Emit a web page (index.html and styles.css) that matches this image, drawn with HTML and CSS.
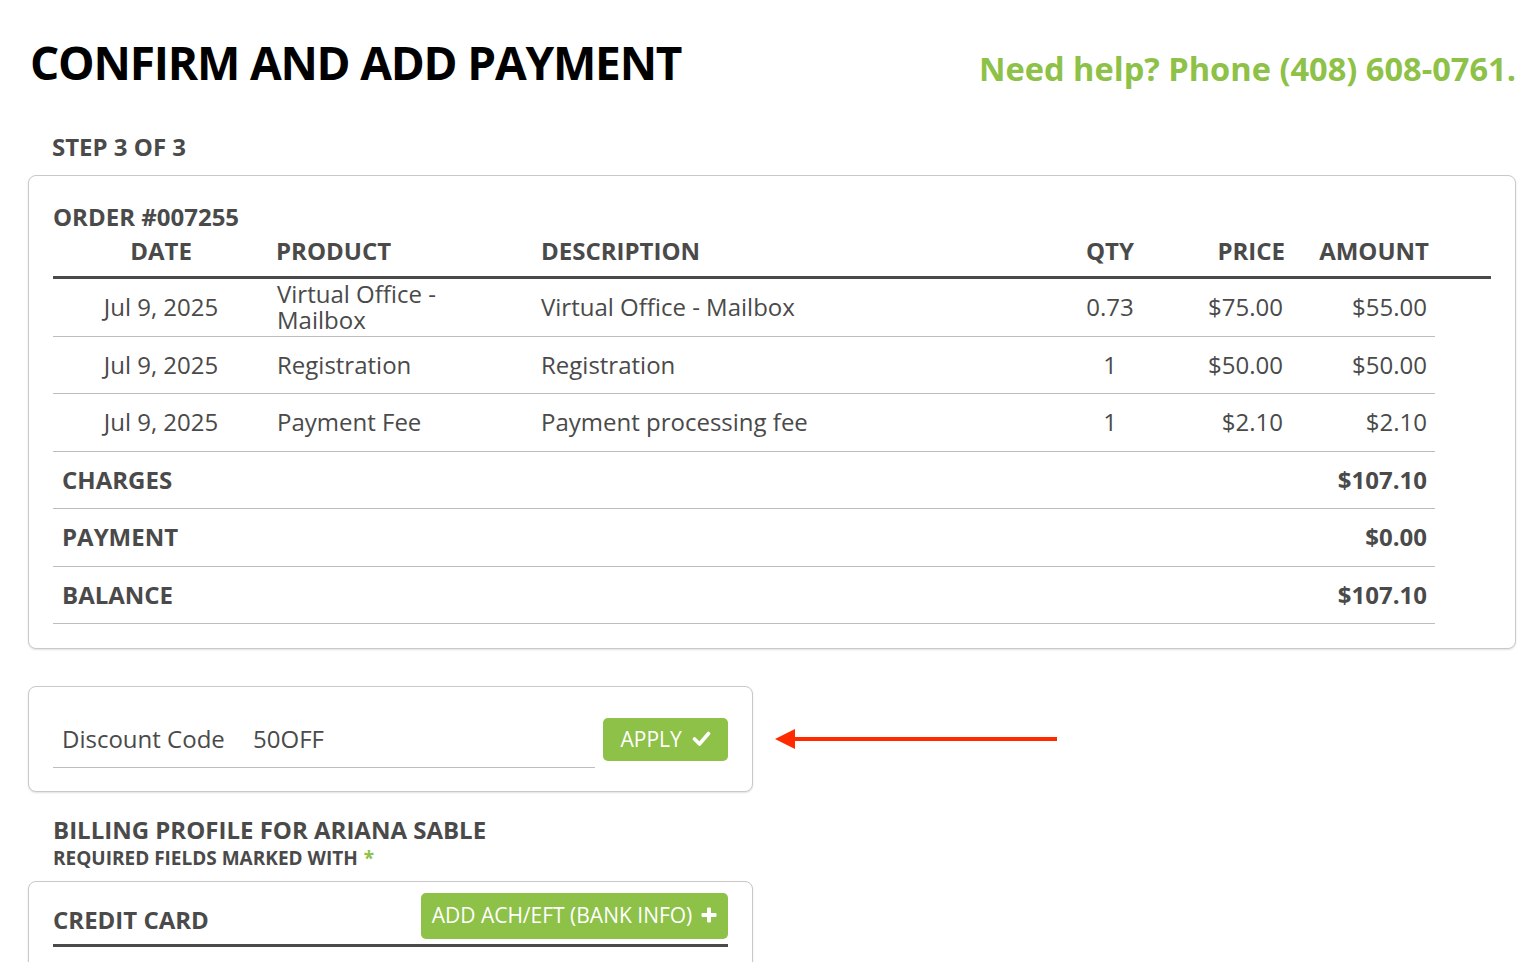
FILE: index.html
```html
<!DOCTYPE html>
<html>
<head>
<meta charset="utf-8">
<link rel="stylesheet" href="styles.css">
</head>
<body>
<div class="page">
  <div class="top">
    <h1 class="title">CONFIRM AND ADD PAYMENT</h1>
    <div class="help">Need help? Phone (408) 608-0761.</div>
  </div>
  <div class="step">STEP 3 OF 3</div>

  <div class="card order-card">
    <div class="order-no">ORDER #007255</div>
    <div class="thead">
      <div class="c-date">DATE</div>
      <div class="c-prod">PRODUCT</div>
      <div class="c-desc">DESCRIPTION</div>
      <div class="c-qty">QTY</div>
      <div class="c-num">PRICE</div>
      <div class="c-num">AMOUNT</div>
      <div></div>
    </div>
    <div class="tr">
      <div class="c-date">Jul 9, 2025</div>
      <div class="c-prod">Virtual Office - Mailbox</div>
      <div class="c-desc">Virtual Office - Mailbox</div>
      <div class="c-qty">0.73</div>
      <div class="c-num">$75.00</div>
      <div class="c-num">$55.00</div>
    </div>
    <div class="tr">
      <div class="c-date">Jul 9, 2025</div>
      <div class="c-prod">Registration</div>
      <div class="c-desc">Registration</div>
      <div class="c-qty">1</div>
      <div class="c-num">$50.00</div>
      <div class="c-num">$50.00</div>
    </div>
    <div class="tr">
      <div class="c-date">Jul 9, 2025</div>
      <div class="c-prod">Payment Fee</div>
      <div class="c-desc">Payment processing fee</div>
      <div class="c-qty">1</div>
      <div class="c-num">$2.10</div>
      <div class="c-num">$2.10</div>
    </div>
    <div class="total"><div class="t-label">CHARGES</div><div class="t-val">$107.10</div></div>
    <div class="total"><div class="t-label">PAYMENT</div><div class="t-val">$0.00</div></div>
    <div class="total"><div class="t-label">BALANCE</div><div class="t-val">$107.10</div></div>
  </div>

  <div class="discount-wrap">
    <div class="card discount-card">
      <div class="discount-field">
        <span class="d-label">Discount Code</span>
        <span class="d-value">50OFF</span>
      </div>
      <button class="btn apply-btn">APPLY
        <svg class="ico" width="19" height="19" viewBox="0 0 19 19"><polyline points="2.5,10 7.5,15 16.5,4.5" fill="none" stroke="#fff" stroke-width="3.6" stroke-linecap="round" stroke-linejoin="round"/></svg>
      </button>
    </div>
    <svg class="arrow" width="282" height="22" viewBox="0 0 282 22"><polygon points="0,11 20,1 20,21" fill="#ff2a00"/><rect x="18" y="9" width="264" height="4" fill="#ff2a00"/></svg>
  </div>

  <div class="billing-title">BILLING PROFILE FOR ARIANA SABLE</div>
  <div class="required">REQUIRED FIELDS MARKED WITH <span class="star">*</span></div>

  <div class="card cc-card">
    <div class="cc-head">
      <div class="cc-title">CREDIT CARD</div>
      <button class="btn ach-btn">ADD ACH/EFT (BANK INFO)
        <svg class="ico" width="16" height="16" viewBox="0 0 16 16"><rect x="6" y="0.5" width="4" height="15" rx="1" fill="#fff"/><rect x="0.5" y="6" width="15" height="4" rx="1" fill="#fff"/></svg>
      </button>
    </div>
  </div>
</div>
</body>
</html>
```

FILE: styles.css
```css
html, body {
  margin: 0;
  padding: 0;
  background: #fff;
}
body {
  font-family: "Open Sans", "Liberation Sans", sans-serif;
  color: #4a4a4a;
  overflow: hidden;
}
.page {
  padding: 0 18px 0 28px;
}
.top {
  display: flex;
  justify-content: space-between;
  align-items: flex-start;
  padding-top: 39px;
  padding-left: 2px;
}
.title {
  margin: 0;
  font-size: 46px;
  line-height: 46px;
  font-weight: 700;
  letter-spacing: -1.2px;
  color: #000;
}
.help {
  margin-top: 14px;
  font-size: 32.6px;
  line-height: 32px;
  font-weight: 700;
  color: #8dc147;
}
.step {
  margin: 47px 0 0 24px;
  font-size: 24px;
  line-height: 30px;
  font-weight: 700;
}
.card {
  border: 1px solid #c9c9c9;
  border-radius: 8px;
  box-shadow: 0 1px 2px rgba(0, 0, 0, 0.12);
  background: #fff;
}
.order-card {
  margin-top: 13px;
  padding: 26px 24px 24px 24px;
}
.order-no {
  font-size: 24px;
  line-height: 30px;
  font-weight: 700;
}
.thead, .tr {
  display: grid;
  grid-template-columns: 216px 264px 509px 100px 149px 144px;
  font-size: 24px;
  line-height: 26px;
}
.thead {
  grid-template-columns: 216px 264px 509px 100px 149px 144px 56px;
  width: 1438px;
  font-weight: 700;
  line-height: 30px;
  padding: 4px 0 10px 0;
  border-bottom: 3px solid #4a4a4a;
}
.tr {
  width: 1382px;
  height: 57.5px;
  box-sizing: border-box;
  border-bottom: 1px solid #bdbdbd;
  align-items: center;
}
.c-date {
  text-align: center;
}
.c-prod {
  padding: 0 30px 0 8px;
}
.thead .c-prod {
  padding-left: 7px;
}
.c-desc {
  padding-left: 8px;
}
.c-qty {
  text-align: center;
  padding-left: 36px;
}
.c-num {
  text-align: right;
  padding-right: 8px;
}
.thead .c-num {
  padding-right: 6px;
}
.total {
  display: flex;
  justify-content: space-between;
  align-items: center;
  width: 1382px;
  height: 57.5px;
  box-sizing: border-box;
  border-bottom: 1px solid #bdbdbd;
  font-size: 24px;
  line-height: 30px;
  font-weight: 700;
}
.t-label {
  padding-left: 9px;
}
.t-val {
  padding-right: 8px;
}
.discount-wrap {
  position: relative;
  width: 725px;
  margin-top: 37px;
}
.discount-card {
  display: flex;
  align-items: flex-start;
  gap: 8px;
  padding: 31px 24px 23px 24px;
}
.discount-field {
  width: 543px;
  box-sizing: border-box;
  padding: 6px 0 13px 9px;
  border-bottom: 1px solid #bdbdbd;
  font-size: 24px;
  line-height: 30px;
}
.d-value {
  margin-left: 22px;
}
.btn {
  display: flex;
  align-items: center;
  justify-content: center;
  gap: 10px;
  border: 0;
  border-radius: 5px;
  background: #8dc147;
  color: #fff;
  font-family: "Open Sans", "Liberation Sans", sans-serif;
  font-size: 21px;
  cursor: pointer;
}
.apply-btn {
  width: 125px;
  height: 43px;
  padding: 0 0 2px 0;
}
.ico {
  display: block;
}
.arrow {
  position: absolute;
  left: 747px;
  top: 42px;
}
.billing-title {
  margin: 23px 0 0 25px;
  font-size: 24px;
  line-height: 30px;
  font-weight: 700;
}
.required {
  margin: 2px 0 0 25px;
  font-size: 19px;
  line-height: 22px;
  font-weight: 700;
}
.star {
  color: #8dc147;
  margin-left: 1px;
}
.cc-card {
  width: 725px;
  box-sizing: border-box;
  margin-top: 12px;
  padding: 11px 24px 40px 24px;
}
.cc-head {
  display: flex;
  justify-content: space-between;
  padding-bottom: 5px;
  border-bottom: 3px solid #4a4a4a;
}
.cc-title {
  align-self: flex-end;
  margin-bottom: 4px;
  font-size: 24px;
  line-height: 30px;
  font-weight: 700;
}
.ach-btn {
  width: 307px;
  height: 46px;
  gap: 9px;
  padding: 0 0 2px 0;
}
```
